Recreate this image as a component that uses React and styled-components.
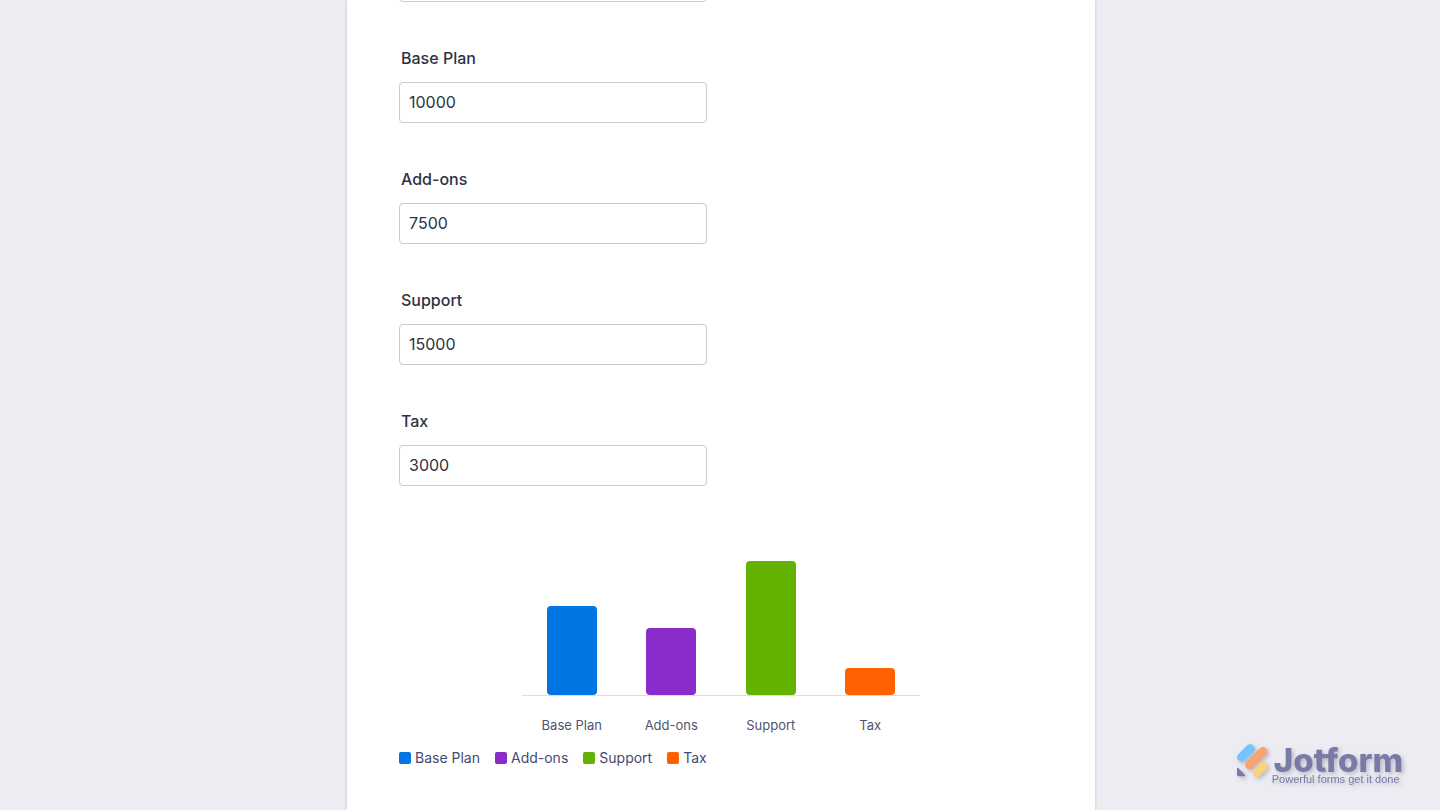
import React, { useState } from 'react';
import styled, { createGlobalStyle } from 'styled-components';

const colors = {
  page: '#edecf3',
  text: '#2c3345',
  border: '#c9cbd8',
  axis: '#dbdcee',
  brand: '#777ba5',
};

const items = [
  { id: 'base', label: 'Base Plan', value: 10000, color: '#0075e3' },
  { id: 'addons', label: 'Add-ons', value: 7500, color: '#892dca' },
  { id: 'support', label: 'Support', value: 15000, color: '#64b200' },
  { id: 'tax', label: 'Tax', value: 3000, color: '#ff6100' },
];

const App = () => {
  const [values, setValues] = useState(items.map((item) => String(item.value)));

  const update = (index, value) => {
    setValues(values.map((v, i) => (i === index ? value : v)));
  };

  const max = Math.max(1, ...values.map((v) => Number(v) || 0));

  return (
    <Page>
      <GlobalStyle />
      <Form>
        <Fields>
          <Input aria-label="Total" />
          {items.map((item, index) => (
            <Field key={item.id}>
              <Label htmlFor={item.id}>{item.label}</Label>
              <Input
                id={item.id}
                value={values[index]}
                onChange={(e) => update(index, e.target.value)}
              />
            </Field>
          ))}
        </Fields>
        <Chart>
          <Bars>
            {items.map((item, index) => (
              <Column key={item.id}>
                <Bar
                  $color={item.color}
                  style={{ height: `${((Number(values[index]) || 0) / max) * 100}%` }}
                />
              </Column>
            ))}
          </Bars>
          <AxisLabels>
            {items.map((item) => (
              <AxisLabel key={item.id}>{item.label}</AxisLabel>
            ))}
          </AxisLabels>
        </Chart>
        <Legend>
          {items.map((item) => (
            <LegendItem key={item.id}>
              <Swatch $color={item.color} />
              {item.label}
            </LegendItem>
          ))}
        </Legend>
      </Form>
      <Brand>
        <BrandMark viewBox="0 0 34 36" aria-hidden="true">
          <g strokeLinecap="round" strokeWidth="9" fill="none">
            <path d="M5.5 14.2 L14.2 5.8" stroke="#74c5fb" />
            <path d="M13.5 21.8 L27 8.4" stroke="#f9a375" />
            <path d="M21.2 29.4 L26.8 23.6" stroke="#f7d281" />
          </g>
          <path d="M1 25.6 C1 24.7 1.6 24.5 2.2 25.1 L8.9 31.7 C9.5 32.4 9.2 33.2 8.3 33.2 H2.6 C1.6 33.2 1 32.6 1 31.6 Z" fill={colors.brand} />
        </BrandMark>
        <BrandText>
          <BrandName>Jotform</BrandName>
          <Tagline>Powerful forms get it done</Tagline>
        </BrandText>
      </Brand>
    </Page>
  );
};

const GlobalStyle = createGlobalStyle`
  * {
    box-sizing: border-box;
  }

  body {
    margin: 0;
    background: ${colors.page};
    font-family: Inter, 'Liberation Sans', sans-serif;
    color: ${colors.text};
  }
`;

const Page = styled.div`
  min-height: 100vh;
  display: flex;
  justify-content: center;
  padding-left: 2px;
  overflow: hidden;
  background: ${colors.page};
`;

const Form = styled.form`
  width: 100%;
  max-width: 748px;
  padding: 0 52px 40px;
  background: #fff;
  box-shadow: 0 0 3px rgba(84, 95, 111, 0.3);
`;

const Fields = styled.div`
  display: flex;
  flex-direction: column;
  gap: 44px;
  margin-top: -39px;
`;

const Field = styled.div`
  display: flex;
  flex-direction: column;
  gap: 12px;
`;

const Label = styled.label`
  padding-left: 2px;
  font-size: 16px;
  font-weight: 500;
  line-height: 24px;
`;

const Input = styled.input`
  width: 100%;
  max-width: 308px;
  height: 41px;
  padding: 0 9px 1px;
  border: 1px solid ${colors.border};
  border-radius: 4px;
  background: #fff;
  font-family: inherit;
  font-size: 16px;
  color: ${colors.text};

  &:focus {
    outline: none;
    border-color: #0075e3;
  }
`;

const Chart = styled.div`
  width: 100%;
  max-width: 398px;
  margin: 75px auto 0;
`;

const Bars = styled.div`
  display: flex;
  height: 135px;
  border-bottom: 1px solid ${colors.axis};
`;

const Column = styled.div`
  flex: 1;
  display: flex;
  align-items: flex-end;
  justify-content: center;
`;

const Bar = styled.div`
  width: 50px;
  border-radius: 4px;
  background: ${(props) => props.$color};
`;

const AxisLabels = styled.div`
  display: flex;
  padding-top: 20px;
`;

const AxisLabel = styled.span`
  flex: 1;
  text-align: center;
  font-size: 13px;
  line-height: 18px;
  color: #50556f;
`;

const Legend = styled.div`
  display: flex;
  flex-wrap: wrap;
  gap: 15px;
  margin-top: 14px;
`;

const LegendItem = styled.span`
  display: flex;
  align-items: center;
  gap: 4px;
  font-size: 14px;
  line-height: 20px;
  color: #434a73;
`;

const Swatch = styled.i`
  width: 12px;
  height: 12px;
  border-radius: 2px;
  background: ${(props) => props.$color};
`;

const Brand = styled.div`
  position: fixed;
  right: 37px;
  bottom: 25px;
  display: flex;
  gap: 2px;
  color: ${colors.brand};
  filter: drop-shadow(2px 2px 2px rgba(60, 60, 90, 0.3));
`;

const BrandMark = styled.svg`
  width: 34px;
  height: 36px;
`;

const BrandText = styled.div`
  display: flex;
  flex-direction: column;
`;

const BrandName = styled.strong`
  padding: 4px 0 0 2px;
  font-size: 33px;
  font-weight: 800;
  line-height: 26px;
`;

const Tagline = styled.span`
  font-family: 'Liberation Sans', Arial, sans-serif;
  font-size: 11px;
  line-height: 12px;
`;

export default App;
